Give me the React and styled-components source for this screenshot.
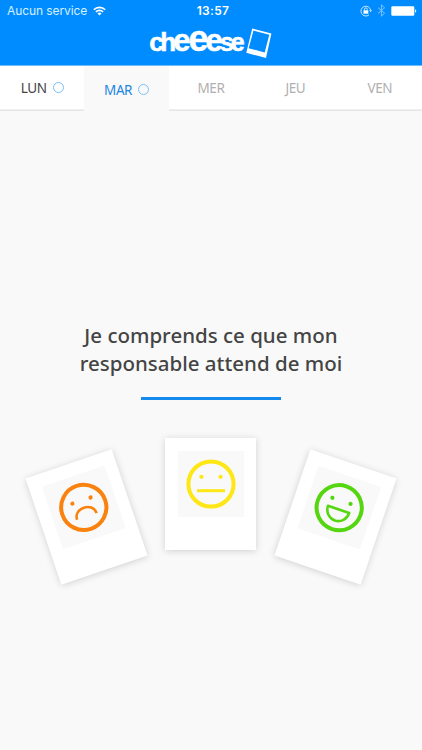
import React from 'react';
import styled, { createGlobalStyle } from 'styled-components';

const GlobalStyle = createGlobalStyle`
    body {
        margin: 0;
        background: #f9f9f9;
    }
    * {
        box-sizing: border-box;
    }
`;

const Screen = styled.div`
    width: 422px;
    height: 750px;
    display: flex;
    flex-direction: column;
    overflow: hidden;
    background: #f9f9f9;
    font-family: "Noto Sans", "Open Sans", sans-serif;
`;

const Header = styled.header`
    height: 66px;
    flex: none;
    background: #008cff;
    border-bottom: 1px solid #6dbcfb;
`;

const StatusBar = styled.div`
    height: 21px;
    display: grid;
    grid-template-columns: 1fr auto 1fr;
    align-items: center;
    padding: 0 5px 0 7px;
    color: #fff;
    font-family: Inter, sans-serif;
    font-size: 12px;
`;

const Carrier = styled.div`
    display: flex;
    align-items: center;
    gap: 6px;
    color: #d5f0ff;
    letter-spacing: -0.08px;
`;

const Clock = styled.div`
    padding-left: 2px;
    font-weight: 600;
    letter-spacing: 0.3px;
`;

const Indicators = styled.div`
    display: flex;
    align-items: center;
    justify-content: flex-end;
    gap: 5px;
`;

const LogoRow = styled.div`
    display: flex;
    justify-content: center;
    height: 43px;
    padding-top: 1px;
`;

const Tabs = styled.nav`
    display: grid;
    grid-template-columns: repeat(5, 1fr);
    height: 45px;
    flex: none;
    background: #fff;
`;

const Tab = styled.div`
    display: flex;
    align-items: center;
    justify-content: center;
    gap: 6px;
    height: ${(p) => (p.$active ? '46px' : '43px')};
    padding-top: ${(p) => (p.$active ? '2px' : '1px')};
    background: ${(p) => (p.$active ? '#f9f9f9' : '#fff')};
    box-shadow: ${(p) => (p.$active ? 'none' : '0 1px 0 #efefef, 0 2px 0 #e6e6e6')};
    color: ${(p) => (p.$active ? '#1b86e3' : p.$disabled ? '#b0b0b0' : '#444')};
    font-size: 13.5px;
    letter-spacing: -0.4px;
`;

const Ring = styled.span`
    width: 11px;
    height: 11px;
    margin-bottom: 2px;
    border: 1px solid #7cc0f7;
    border-radius: 50%;
`;

const Content = styled.main`
    display: flex;
    flex-direction: column;
    align-items: center;
    padding-top: 210px;
`;

const Question = styled.h1`
    margin: 0;
    color: #444;
    font-size: 20.5px;
    font-weight: 500;
    line-height: 28px;
    text-align: center;
    white-space: pre-line;
`;

const Divider = styled.div`
    width: 140px;
    height: 3px;
    margin-top: 20px;
    background: #1489ee;
`;

const Cards = styled.div`
    display: flex;
    align-items: flex-start;
    gap: 33.5px;
    margin-top: 38px;
    padding-right: 1px;
`;

const Polaroid = styled.button`
    display: flex;
    flex-direction: column;
    width: 91px;
    height: 112px;
    margin: ${(p) => (p.$tilt ? '22.5px' : '0')} 0 0;
    padding: 13px 12.5px 0;
    border: 0;
    background: #fff;
    box-shadow: 0 1px 7px rgba(0, 0, 0, 0.17);
    transform: rotate(${(p) => p.$tilt}deg);
`;

const Photo = styled.div`
    display: flex;
    align-items: center;
    justify-content: center;
    width: 66px;
    height: 66px;
    background: #f9f9f9;
`;

const WifiIcon = () => (
    <svg width="13" height="10" viewBox="0 0 13 10" fill="none" stroke="#fff" strokeWidth="1.6">
        <path d="M0.8 3.7a8.1 8.1 0 0 1 11.4 0" />
        <path d="M2.9 5.9a5.1 5.1 0 0 1 7.2 0" />
        <path d="M6.5 9.5L4.5 7.4a2.9 2.9 0 0 1 4 0z" fill="#fff" stroke="none" />
    </svg>
);

const LockIcon = () => (
    <svg width="12" height="12" viewBox="0 0 12 12" fill="none" stroke="#c9e8ff" strokeWidth="1">
        <path d="M9 9.9a4.9 4.9 0 1 1 1.7-4.6" />
        <path d="M9.2 5.2h2.8l-1.4 2z" fill="#c9e8ff" stroke="none" />
        <path d="M4.5 5.5V4.3a1.4 1.4 0 0 1 2.8 0v1.2" />
        <rect x="3.5" y="5.3" width="4.8" height="3.4" fill="#fff" stroke="none" />
    </svg>
);

const BluetoothIcon = () => (
    <svg width="9" height="13" viewBox="0 0 9 13" fill="none" stroke="#7cc5ff" strokeWidth="1">
        <path d="M1 3.6l6.6 5.6-3.2 3V.8l3.2 3L1 9.4" />
    </svg>
);

const BatteryIcon = () => (
    <svg width="26" height="10" viewBox="0 0 26 10">
        <rect x="0.3" y="0.3" width="23" height="9.4" rx="1.2" fill="#fff" />
        <path d="M24.1 3.2a2 2 0 0 1 0 3.6z" fill="#fff" />
    </svg>
);

const Logo = () => (
    <svg width="124" height="43" viewBox="149 22 124 43" overflow="visible">
        <text
            y="50.6"
            fill="#fff"
            stroke="#fff"
            strokeWidth="0.5"
            fontFamily="Liberation Sans, Arial, sans-serif"
            fontWeight="700"
        >
            <tspan x="149.2 160.2" fontSize="26">ch</tspan>
            <tspan x="173.2" fontSize="31">e</tspan>
            <tspan x="188.6" fontSize="36">e</tspan>
            <tspan x="205.4" fontSize="31">e</tspan>
            <tspan x="220 230.8" fontSize="25">se</tspan>
        </text>
        <path
            d="M252.2 28.5L271.4 33.5L266 58.1L246.3 52.8ZM253.5 30.5L248.7 48.2L264.7 52.5L269.3 34.7Z"
            fill="#fff"
            fillRule="evenodd"
        />
    </svg>
);

const faces = {
    sad: {
        color: '#fa820f',
        mouth: <path d="M-10.3 9.6C-10.3 -2.8 10.3 -2.8 10.3 9.6" strokeWidth="2.6" />,
    },
    neutral: {
        color: '#fee715',
        mouth: <path d="M-14 6.7H14" strokeWidth="3" />,
    },
    happy: {
        color: '#56d610',
        mouth: <path d="M-11.2 1.8H11.2A11.2 11.8 0 0 1 -11.2 1.8Z" strokeWidth="2.6" strokeLinejoin="round" />,
    },
};

const Face = ({ mood }) => {
    const { color, mouth } = faces[mood];

    return (
        <svg width="50" height="50" viewBox="-25 -25 50 50" fill="none" stroke={color}>
            <circle r="22.6" strokeWidth="4" />
            <circle cx="-9.6" cy="-7.2" r="2.1" fill={color} stroke="none" />
            <circle cx="9.6" cy="-7.2" r="2.1" fill={color} stroke="none" />
            {mouth}
        </svg>
    );
};

const days = [
    { name: 'LUN', ring: true },
    { name: 'MAR', ring: true, active: true },
    { name: 'MER', disabled: true },
    { name: 'JEU', disabled: true },
    { name: 'VEN', disabled: true },
];

const answers = [
    { mood: 'sad', tilt: -18.7 },
    { mood: 'neutral', tilt: 0 },
    { mood: 'happy', tilt: 18.7 },
];

const App = () => {
    return (
        <Screen>
            <GlobalStyle />
            <Header>
                <StatusBar>
                    <Carrier>Aucun service <WifiIcon /></Carrier>
                    <Clock>13:57</Clock>
                    <Indicators>
                        <LockIcon />
                        <BluetoothIcon />
                        <BatteryIcon />
                    </Indicators>
                </StatusBar>
                <LogoRow>
                    <Logo />
                </LogoRow>
            </Header>
            <Tabs>
                {days.map((day) => (
                    <Tab key={day.name} $active={day.active} $disabled={day.disabled}>
                        {day.name}
                        {day.ring && <Ring />}
                    </Tab>
                ))}
            </Tabs>
            <Content>
                <Question>{'Je comprends ce que mon\nresponsable attend de moi'}</Question>
                <Divider />
                <Cards>
                    {answers.map(({ mood, tilt }) => (
                        <Polaroid key={mood} $tilt={tilt}>
                            <Photo>
                                <Face mood={mood} />
                            </Photo>
                        </Polaroid>
                    ))}
                </Cards>
            </Content>
        </Screen>
    );
};

export default App;
